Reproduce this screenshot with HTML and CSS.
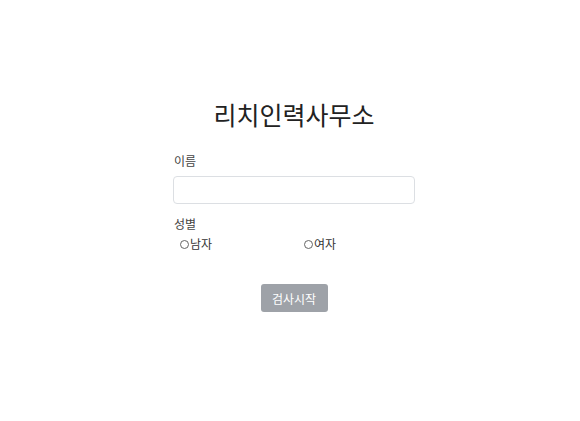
FILE: index.html
```html
<!DOCTYPE html>
<html lang="ko">
<head>
    <meta charset="UTF-8">
    <title>리치인력사무소</title>
    <link rel="stylesheet" href="styles.css">
</head>
<body>
    <div class="container">
        <h1>리치인력사무소</h1>
        <form class="form">
            <label class="label" for="name">이름</label>
            <input class="input" type="text" id="name">
            <div class="label gender-label">성별</div>
            <div class="radios">
                <label class="radio"><span class="dot"></span>남자</label>
                <label class="radio"><span class="dot"></span>여자</label>
            </div>
            <div class="actions">
                <button type="button" class="btn" disabled>검사시작</button>
            </div>
        </form>
    </div>
</body>
</html>
```

FILE: styles.css
```css
body {
    margin: 0;
    padding-left: 8px;
    font-family: 'Noto Sans CJK KR', 'Noto Sans', sans-serif;
    color: #222;
    background: #fff;
}
.container {
    width: 242px;
    margin: 0 auto;
    padding-top: 94px;
}
h1 {
    margin: 0 -60px 18px;
    text-align: center;
    font-size: 25px;
    font-weight: 400;
    line-height: 40px;
    color: #222;
}
.form {
    display: flex;
    flex-direction: column;
}
.label {
    font-size: 12px;
    line-height: 18px;
    color: #444;
    margin-left: 1px;
    margin-bottom: 6px;
}
.input {
    height: 28px;
    box-sizing: border-box;
    border: 1px solid #dcdfe3;
    border-radius: 4px;
    margin: 0 0 11px;
}
.gender-label {
    margin-bottom: 2px;
}
.radios {
    display: flex;
    padding-left: 7px;
}
.radio {
    flex: 0 0 124px;
    display: flex;
    align-items: center;
    font-size: 12px;
    line-height: 18px;
    color: #333;
}
.dot {
    width: 7px;
    height: 7px;
    border: 1px solid #666;
    border-radius: 50%;
    margin-right: 1px;
}
.actions {
    display: flex;
    justify-content: center;
    margin-top: 31px;
}
.btn {
    font-family: inherit;
    font-size: 12px;
    color: #fff;
    background: #9ea2a8;
    border: none;
    border-radius: 3px;
    width: 67px;
    height: 28px;
    padding: 0;
}
```
